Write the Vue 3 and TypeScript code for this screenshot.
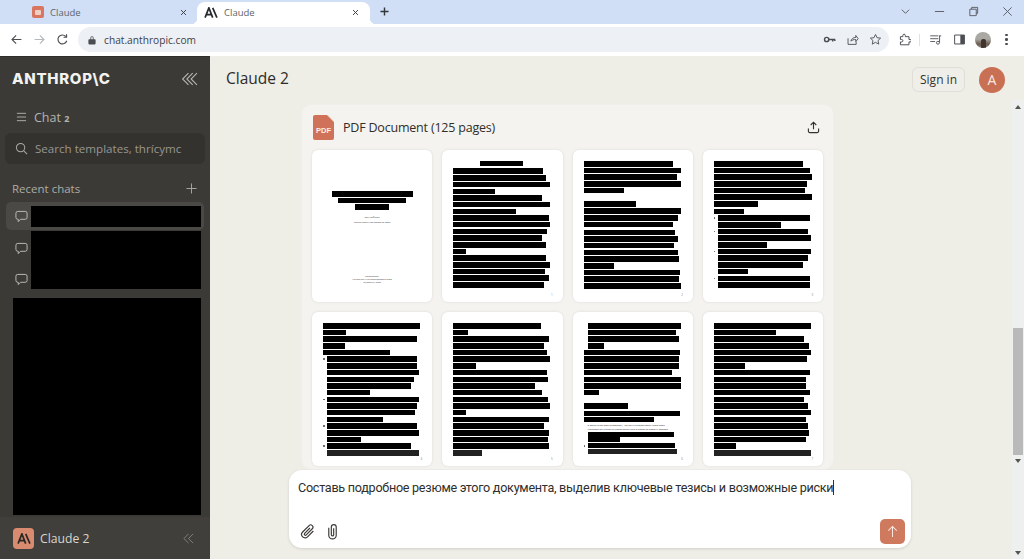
<script setup lang="ts">
// один блок-бар на странице PDF
interface Bar {
  w: number
  top?: number // отступ сверху от предыдущей строки, по умолчанию 1.2
  h?: number
  indent?: boolean
  dot?: boolean
}

interface Block {
  tiny?: string[]
  bar?: Bar
}

const plain = (list: number[]): Bar[] => list.map((w) => ({ w }))
const listed = (list: number[], dots: number[]): Bar[] =>
  list.map((w, i) => ({ w, indent: true, dot: dots.includes(i) }))
const blocks = (bars: Bar[]): Block[] => bars.map((bar) => ({ bar }))

const pages: Block[][] = [
  blocks(plain([90, 93, 97, 42, 89, 97, 63, 96, 97, 94, 89, 93, 13, 93, 97, 92, 96, 91])),
  blocks([
    ...plain([89, 97, 93, 97, 40]),
    { w: 52, top: 7.8 },
    { w: 97, top: 1.8 },
    ...plain([94, 89]),
    { w: 91, top: 2.4 },
    ...plain([94, 90, 94, 95, 30, 96, 95, 97])
  ]),
  blocks([
    ...plain([89, 96, 98, 93, 91, 98, 44]),
    { w: 30, top: 2 },
    ...listed([92, 63, 90, 93, 49, 93, 90, 85, 30, 92, 92], [0, 2, 5, 9])
  ]),
  blocks([
    ...plain([97, 23, 94, 22, 67]),
    ...listed([90, 90, 92, 87, 84, 43, 92, 90, 88, 56, 90, 92, 34, 84, 92], [0, 6, 10, 13])
  ]),
  blocks(plain([88, 15, 96, 91, 94, 97, 23, 94, 95, 82, 89, 95, 97, 13, 96, 91, 96, 95, 96, 29])),
  [
    ...blocks([
      ...listed([93, 88, 91, 16], []),
      ...plain([96, 95, 95, 88, 97, 97, 15]),
      { w: 44, top: 8 },
      { w: 96, top: 2, h: 5 },
      { w: 70, h: 5 }
    ]),
    {
      tiny: [
        'В заключение можно отметить, что данные показывают устойчивое',
        'направления и требуют дополнительного анализа со стороны авторов'
      ]
    },
    ...blocks([
      { w: 86, indent: true, top: 0.5, h: 4.5 },
      { w: 32, indent: true, top: 0.5, h: 4.5 },
      { w: 87, indent: true, top: 1.5, dot: true, h: 5 },
      { w: 89, indent: true, top: 0.5, h: 5 }
    ])
  ],
  blocks(plain([97, 62, 90, 95, 97, 93, 31, 96, 92, 92, 96, 90, 94, 97, 92, 94, 95, 92, 22, 97]))
]

const message = 'Составь подробное резюме этого документа, выделив ключевые тезисы и возможные риски'
</script>

<template>
  <div class="window">
    <!-- полоса вкладок -->
    <div class="tabstrip">
      <div class="tab">
        <span class="fav-orange"><i></i></span>
        <span class="tab-title">Claude</span>
        <svg class="tab-x" viewBox="0 0 10 10"><path d="M1.5 1.5l7 7M8.5 1.5l-7 7" /></svg>
      </div>
      <div class="tab active">
        <svg class="fav-a" viewBox="0 0 16 13"><path d="M1 12.500 5.500 1 10 12.500M3 9h5M10 1l5 11.500" /></svg>
        <span class="tab-title">Claude</span>
        <svg class="tab-x" viewBox="0 0 10 10"><path d="M1.5 1.5l7 7M8.5 1.5l-7 7" /></svg>
      </div>
      <svg class="tab-plus" viewBox="0 0 10 10"><path d="M5 .5v9M.5 5h9" /></svg>
      <div class="win-ctrl">
        <svg viewBox="0 0 12 12"><path d="M2 4l4 4 4-4" /></svg>
        <svg viewBox="0 0 12 12"><path d="M1 6h10" /></svg>
        <svg viewBox="0 0 12 12"><path d="M2 3.500h7v7H2zM4 3.500V1.500h6.500V8H9" /></svg>
        <svg viewBox="0 0 12 12"><path d="M1.500 1.500l9 9M10.500 1.500l-9 9" /></svg>
      </div>
    </div>

    <!-- тулбар браузера -->
    <div class="toolbar">
      <div class="nav">
        <svg viewBox="0 0 16 16"><path d="M14 8H2.500M7.500 3 2.500 8l5 5" /></svg>
        <svg class="off" viewBox="0 0 16 16"><path d="M2 8h11.500M8.500 3l5 5-5 5" /></svg>
        <svg viewBox="0 0 16 16"><path d="M13.200 9.500A5.500 5.500 0 1 1 12 4.200M13 1.500v3.700H9.300" /></svg>
      </div>
      <div class="omnibox">
        <svg class="lock" viewBox="0 0 10 12"><path d="M1.500 5h7a1 1 0 0 1 1 1v4.500a1 1 0 0 1-1 1h-7a1 1 0 0 1-1-1V6a1 1 0 0 1 1-1ZM3 5V3.200a2 2 0 0 1 4 0V5H6V3.200a1 1 0 0 0-2 0V5Z" /></svg>
        <span class="url">chat.anthropic.com</span>
        <div class="omni-icons">
          <svg class="key" viewBox="0 0 16 16"><circle cx="4.500" cy="8" r="2.600" /><path d="M7.200 8H15M12 8v2.500M14.500 8v1.800" /></svg>
          <svg viewBox="0 0 16 16"><path d="M2.500 6.500V14h10v-3.500M6 10c.5-3 3-4.500 6-4.500V3l3 4-3 3.500V8c-2.500 0-4.500.5-6 2Z" /></svg>
          <svg viewBox="0 0 16 16"><path d="m8 1.800 1.900 4 4.400.5-3.200 3 .9 4.400L8 11.500l-4 2.200.9-4.400-3.200-3 4.400-.5Z" /></svg>
        </div>
      </div>
      <div class="browser-icons">
        <svg class="ext" viewBox="0 0 16 16"><path d="M3 4.500h3V3a1.500 1.500 0 0 1 3 0v1.500h4.500V8H15a1.500 1.500 0 0 1 0 3h-1.500v3.500H3V11h1.500a1.500 1.500 0 0 0 0-3H3Z" /></svg>
        <span class="divider"></span>
        <svg class="media" viewBox="0 0 16 16"><path d="M1.500 3.500h10M1.500 7h10M1.500 10.500h6M12.500 3.500h2.500M13 3.500v8" /><circle cx="11" cy="12" r="1.800" /></svg>
        <svg class="panel" viewBox="0 0 16 16"><path d="M2 2.500h12v11H2z" /><path class="fill" d="M9 2.500h5v11H9z" /></svg>
        <span class="profile"><i></i></span>
        <span class="dots"><i></i><i></i><i></i></span>
      </div>
    </div>

    <div class="body">
      <!-- левая панель -->
      <aside class="sidebar">
        <div class="side-top">
          <span class="brand">ANTHROP\C</span>
          <svg class="side-chev" viewBox="0 0 16 13"><path d="M7 1 1.500 6.500 7 12M11 1 5.500 6.500 11 12M15 1 9.500 6.500 15 12" /></svg>
        </div>
        <div class="side-nav">
          <svg viewBox="0 0 12 10"><path d="M1 1h10M1 5h10M1 9h10" /></svg>
          <span>Chat <small>2</small></span>
        </div>
        <div class="search">
          <svg viewBox="0 0 14 14"><circle cx="6" cy="6" r="4.500" /><path d="m9.500 9.500 3.500 3.500" /></svg>
          <span>Search templates, thrícymc</span>
        </div>
        <div class="recent-head">
          <span>Recent chats</span>
          <svg viewBox="0 0 12 12"><path d="M6 .5v11M.5 6h11" /></svg>
        </div>
        <div class="chat-row current">
          <svg viewBox="0 0 14 14"><path d="M3 1.500h8a2 2 0 0 1 2 2V8a2 2 0 0 1-2 2H6l-2.500 2.500V10H3a2 2 0 0 1-2-2V3.500a2 2 0 0 1 2-2Z" /></svg>
          <div class="redact r1"></div>
        </div>
        <div class="chat-pair">
          <div class="pair-icons">
            <svg viewBox="0 0 14 14"><path d="M3 1.500h8a2 2 0 0 1 2 2V8a2 2 0 0 1-2 2H6l-2.500 2.500V10H3a2 2 0 0 1-2-2V3.500a2 2 0 0 1 2-2Z" /></svg>
            <svg viewBox="0 0 14 14"><path d="M3 1.500h8a2 2 0 0 1 2 2V8a2 2 0 0 1-2 2H6l-2.500 2.500V10H3a2 2 0 0 1-2-2V3.500a2 2 0 0 1 2-2Z" /></svg>
          </div>
          <div class="redact r2"></div>
        </div>
        <div class="redact r3"></div>
        <div class="side-foot">
          <span class="foot-logo">
            <svg viewBox="0 0 16 13"><path d="M1 12.500 5.500 1 10 12.500M3 9h5M10 1l5 11.500" /></svg>
          </span>
          <span class="foot-name">Claude 2</span>
          <svg class="foot-chev" viewBox="0 0 12 12"><path d="M6 1 1 6l5 5M11 1 6 6l5 5" /></svg>
        </div>
      </aside>

      <!-- основная часть -->
      <main class="main">
        <header class="topbar">
          <h1>Claude 2</h1>
          <button class="signin">Sign in</button>
          <span class="user">A</span>
        </header>
        <div class="scroll-wrap">
          <div class="content">
            <section class="doc">
              <div class="doc-head">
                <span class="pdf-icon">PDF</span>
                <span class="doc-title">PDF Document (125 pages)</span>
                <svg class="upload" viewBox="0 0 14 14"><path d="M7 9V1.500M4 4.300 7 1.300l3 3M1.500 8v3a1.500 1.500 0 0 0 1.500 1.500h8a1.500 1.500 0 0 0 1.500-1.500V8" /></svg>
              </div>
              <div class="grid">
                <div class="page cover">
                  <div class="cover-bar" style="width: 81px"></div>
                  <div class="cover-bar" style="width: 68px"></div>
                  <div class="cover-bar" style="width: 34px"></div>
                  <p class="tiny t1">Ваш реферат</p>
                  <p class="tiny t2">Заключительная работа за 2023</p>
                  <div class="cover-bottom">
                    <p class="tiny">Составитель</p>
                    <p class="tiny">Национальный исследовательский</p>
                    <p class="tiny">Будапешт, 2023</p>
                  </div>
                </div>
                <div v-for="(page, i) in pages" :key="i" class="page">
                  <div v-if="i === 0" class="page-title-bar"></div>
                  <template v-for="(block, j) in page" :key="j">
                    <div v-if="block.tiny" class="tiny-list">
                      <p v-for="(text, k) in block.tiny" :key="k" class="tiny">{{ text }}</p>
                    </div>
                    <div
                      v-if="block.bar"
                      class="line"
                      :class="{ indent: block.bar.indent, dot: block.bar.dot }"
                      :style="{
                        width: block.bar.w + 'px',
                        height: (block.bar.h ?? 5.5) + 'px',
                        marginTop: (j === 0 && i > 0 ? 0 : block.bar.top ?? 1.2) + 'px'
                      }"
                    ></div>
                  </template>
                  <span class="num">{{ i + 1 }}</span>
                </div>
              </div>
            </section>
          </div>
          <div class="scrollbar">
            <span class="arrow up"></span>
            <div class="thumb"></div>
            <span class="arrow down mid"></span>
            <span class="arrow down last"></span>
          </div>
        </div>
        <!-- поле ввода поверх контента -->
        <div class="composer">
          <div class="prompt">{{ message }}<span class="caret"></span></div>
          <div class="composer-foot">
            <svg class="clip" viewBox="0 0 16 16"><path d="M13.500 7.500 8 13a3.200 3.200 0 0 1-4.600-4.500L9.500 2.400a2.100 2.100 0 0 1 3 3L6.800 11.200a1 1 0 0 1-1.500-1.500l5-5" /></svg>
            <svg class="clip" viewBox="0 0 16 16"><path d="M4.500 4.500v7a3.500 3.500 0 0 0 7 0V3.800a2.300 2.300 0 0 0-4.600 0V11a1.100 1.100 0 0 0 2.200 0V5" /></svg>
            <button class="send">
              <svg viewBox="0 0 14 14"><path d="M7 13V1.500M2.500 6 7 1.500 11.500 6" /></svg>
            </button>
          </div>
        </div>
      </main>
    </div>
  </div>
</template>

<style>
html, body { margin: 0; height: 100%; overflow: hidden; }
</style>

<style scoped>
.window {
  width: 1024px;
  height: 559px;
  display: flex;
  flex-direction: column;
  font-family: "Open Sans", "Noto Sans", sans-serif;
  overflow: hidden;
}
svg { fill: none; stroke: currentColor; flex: none; }

/* вкладки */
.tabstrip {
  height: 24px;
  background: #d0dff6;
  display: flex;
  align-items: flex-end;
  padding-left: 25px;
  color: #454a52;
}
.tab {
  width: 172px;
  height: 22px;
  display: flex;
  align-items: center;
  padding: 0 7px 2px;
  box-sizing: border-box;
  position: relative;
}
.tab.active {
  background: #fff;
  border-radius: 8px 8px 0 0;
  width: 173px;
}
.tab.active::before,
.tab.active::after {
  content: "";
  position: absolute;
  bottom: 0;
  width: 6px;
  height: 6px;
}
.tab.active::before { left: -6px; background: radial-gradient(circle at 0 0, transparent 6px, #fff 6.5px); }
.tab.active::after { right: -6px; background: radial-gradient(circle at 100% 0, transparent 6px, #fff 6.5px); }
.fav-orange {
  width: 12px;
  height: 12px;
  border-radius: 2px;
  background: #d9765f;
  display: flex;
  align-items: center;
  justify-content: center;
}
.fav-orange i { width: 6px; height: 5px; background: #f2cfc4; border-radius: 1px; }
.fav-a { width: 14px; height: 11px; stroke: #26292e; stroke-width: 2; }
.tab-title {
  margin-left: 6px;
  font-size: 9.500px;
  color: #606368;
  flex: 1;
}
.tab-x { width: 7px; height: 7px; stroke-width: 1.400; color: #3e4146; margin-right: 3px; }
.active .tab-x { margin-right: 4px; }
.tab-plus { width: 9px; height: 9px; stroke-width: 1.600; margin: 0 0 8px 10px; color: #33373d; }
.win-ctrl {
  margin-left: auto;
  display: flex;
  align-items: center;
  gap: 23px;
  padding: 0 11px 7px 0;
  color: #55585e;
}
.win-ctrl svg { width: 11px; height: 11px; stroke-width: 1; }

/* тулбар */
.toolbar {
  height: 32px;
  background: #fff;
  display: flex;
  align-items: center;
  box-sizing: border-box;
  padding-bottom: 1px;
  color: #4a4d52;
}
.nav {
  width: 78px;
  display: flex;
  gap: 10px;
  padding-left: 10px;
  box-sizing: border-box;
}
.nav svg { width: 13px; height: 13px; stroke-width: 1.400; }
.nav .off { color: #b4b7bb; }
.omnibox {
  width: 811px;
  height: 25px;
  border-radius: 13px;
  background: #edf0f4;
  display: flex;
  align-items: center;
  padding: 0 7px 0 10px;
  box-sizing: border-box;
}
.lock { width: 8px; height: 10px; fill: #4a4d52; stroke: none; }
.url { margin-left: 8px; font-size: 10.200px; color: #3e4146; }
.omni-icons { margin-left: auto; display: flex; gap: 10px; align-items: center; }
.omni-icons svg { width: 13px; height: 13px; stroke-width: 1.100; }
.omni-icons .key { stroke-width: 1.800; }
.browser-icons { display: flex; align-items: center; flex: 1; padding-left: 9px; }
.ext { width: 13px; height: 13px; stroke-width: 1.200; }
.divider { width: 1px; height: 12px; background: #dfe1e4; margin: 0 9px 0 8px; }
.media { width: 13px; height: 13px; stroke-width: 1.100; }
.panel { width: 13px; height: 13px; stroke-width: 1.200; margin-left: 11px; }
.panel .fill { fill: currentColor; stroke: none; }
.profile {
  width: 16px;
  height: 16px;
  border-radius: 50%;
  margin-left: 9px;
  background: linear-gradient(#a9a8a3 45%, #6d5c50 75%, #8d8a85);
  display: flex;
  justify-content: center;
  align-items: flex-end;
  overflow: hidden;
}
.profile i { width: 5px; height: 9px; background: #41362f; border-radius: 2px 2px 0 0; }
.dots { display: flex; flex-direction: column; gap: 2px; margin-left: 14px; }
.dots i { width: 2.500px; height: 2.500px; border-radius: 50%; background: #4a4d52; }

.body { flex: 1; display: flex; min-height: 0; }

/* сайдбар */
.sidebar {
  width: 210px;
  flex: none;
  background: #3b3a37;
  color: #c4c2bb;
  display: flex;
  flex-direction: column;
  box-sizing: border-box;
  border-top: 1px solid #2f2e2c;
}
.side-top {
  height: 43px;
  display: flex;
  align-items: center;
  justify-content: space-between;
  padding: 0 12px;
}
.brand {
  font-family: Inter, sans-serif;
  font-weight: 800;
  font-size: 15px;
  letter-spacing: 0.700px;
  color: #f3f2ee;
}
.side-chev { width: 17px; height: 14px; stroke-width: 1; color: #b9b7b0; }
.side-nav {
  height: 24px;
  display: flex;
  align-items: center;
  gap: 7px;
  padding-left: 16px;
  margin-top: 5px;
  font-size: 12.500px;
  color: #b6b4ad;
}
.side-nav svg { width: 11px; height: 10px; stroke-width: 1; }
.side-nav small { font-size: 9px; font-weight: 700; }
.search {
  margin: 4px 5px 0;
  height: 31px;
  border-radius: 6px;
  background: #33322f;
  display: flex;
  align-items: center;
  padding: 0 10px;
  gap: 7px;
  font-size: 11.600px;
  color: #989690;
  white-space: nowrap;
  overflow: hidden;
}
.search svg { width: 13px; height: 13px; stroke-width: 1.100; color: #aaa8a1; }
.recent-head {
  display: flex;
  align-items: center;
  justify-content: space-between;
  padding: 0 13px 0 12px;
  margin-top: 14px;
  height: 20px;
  font-size: 11.500px;
  color: #aeaca5;
}
.recent-head svg { width: 11px; height: 11px; stroke-width: 1; }
.chat-row {
  margin: 4px 6px 0;
  height: 28px;
  border-radius: 5px;
  display: flex;
  align-items: center;
  background: #4a4946;
}
.chat-row svg, .pair-icons svg { width: 13px; height: 13px; stroke-width: 1; color: #c3c1ba; margin-left: 9px; }
.redact { background: #000; }
.r1 { width: 170px; height: 21px; margin-left: 3px; }
.chat-pair { display: flex; margin: 1px 9px 0 0; padding-left: 6px; }
.pair-icons {
  width: 25px;
  display: flex;
  flex-direction: column;
  padding-top: 11px;
  gap: 18px;
}
.r2 { width: 170px; height: 58px; }
.r3 { width: 188px; height: 217px; margin: 9px 0 0 13px; }
.side-foot {
  margin-top: 2px;
  flex: 1;
  background: #403f3c;
  display: flex;
  align-items: center;
  padding: 0 16px 0 13px;
}
.foot-logo {
  width: 21px;
  height: 21px;
  border-radius: 4px;
  background: #d98b70;
  display: flex;
  align-items: center;
  justify-content: center;
}
.foot-logo svg { width: 14px; height: 11px; stroke: #2a2926; stroke-width: 2; }
.foot-name { margin-left: 6px; font-size: 12.200px; font-weight: 500; color: #d8d6cf; }
.foot-chev { margin-left: auto; width: 11px; height: 11px; stroke-width: 0.900; color: #8f8d87; }

/* основная часть */
.main {
  flex: 1;
  position: relative;
  background: #eeede6;
  display: flex;
  flex-direction: column;
  min-width: 0;
}
.topbar {
  height: 44px;
  display: flex;
  align-items: center;
  padding: 0 19px 0 16px;
  flex: none;
}
.topbar h1 {
  margin: 0;
  font-size: 15.500px;
  font-weight: 500;
  color: #2d2c29;
  flex: 1;
}
.signin {
  width: 53px;
  height: 25px;
  padding: 0;
  font: inherit;
  font-size: 12px;
  border: 1px solid #e0ded6;
  border-radius: 6px;
  background: #efeee8;
  color: #33322f;
  margin-top: 3px;
}
.user {
  width: 26px;
  height: 26px;
  border-radius: 50%;
  background: #c96f53;
  color: #fbe9e2;
  font-size: 14px;
  display: flex;
  align-items: center;
  justify-content: center;
  margin: 3px 0 0 14px;
}
.scroll-wrap { flex: 1; display: flex; min-height: 0; }
.content { flex: 1; overflow: hidden; padding: 4px 0 0 91px; }
.doc {
  width: 533px;
  background: #f4f3ef;
  border: 1px solid #f0efe9;
  border-radius: 10px;
  box-sizing: border-box;
  padding: 0 10px 3px 10px;
}
.doc-head {
  height: 45px;
  display: flex;
  align-items: center;
  padding: 0 3px 0 1px;
}
.pdf-icon {
  width: 21px;
  height: 25px;
  background: linear-gradient(225deg, #e8b3a1 0 5px, #cf7259 5px);
  border-radius: 2px;
  clip-path: polygon(0 0, 70% 0, 100% 26%, 100% 100%, 0 100%);
  color: #fbeee9;
  font: 700 7.500px "Liberation Sans", sans-serif;
  display: flex;
  align-items: flex-end;
  justify-content: center;
  padding-bottom: 5px;
  box-sizing: border-box;
}
.doc-title { margin-left: 9px; font-size: 12.500px; letter-spacing: -0.200px; color: #2f2e2b; flex: 1; }
.upload { width: 13px; height: 13px; stroke-width: 1.200; color: #33322f; }
.grid {
  display: grid;
  grid-template-columns: repeat(4, 120.300px);
  grid-template-rows: 152px 154px;
  gap: 10px;
}
.page {
  background: #fff;
  border-radius: 6px;
  box-shadow: 0 0 3px rgba(0, 0, 0, 0.1);
  padding: 11px 0 0 11px;
  box-sizing: border-box;
  position: relative;
  display: flex;
  flex-direction: column;
}
.page-title-bar { width: 43px; height: 5px; background: #000; margin: 0 0 1.300px 27px; }
.line { background: #000; flex: none; position: relative; }
.page:nth-child(n+5) .line:last-of-type { background: #222; }
.line.indent { margin-left: 4px; }
.line.dot::before {
  content: "";
  position: absolute;
  left: -4px;
  top: 2px;
  width: 1.500px;
  height: 1.500px;
  border-radius: 50%;
  background: #555;
}
.num { position: absolute; right: 10px; bottom: 5px; font-size: 3px; color: #888; }
.cover { align-items: center; padding: 41px 0 0; }
.cover-bar { height: 5.500px; background: #000; margin-bottom: 1px; flex: none; }
.tiny { margin: 0; font-size: 2.300px; line-height: 3px; color: #333; text-align: center; white-space: nowrap; }
.t1 { margin-top: 5px; }
.t2 { margin-top: 2.400px; }
.cover-bottom { margin-top: 51px; }
.tiny-list { margin: 1.500px 0 0 4px; }
.tiny-list .tiny { text-align: left; line-height: 4px; color: #222; }

/* скроллбар */
.scrollbar {
  width: 12px;
  flex: none;
  background: #eef0f0;
  display: flex;
  flex-direction: column;
  align-items: center;
  padding-top: 5px;
  box-sizing: border-box;
}
.arrow { width: 0; height: 0; border-left: 3px solid transparent; border-right: 3px solid transparent; flex: none; }
.arrow.up { border-bottom: 4px solid #55544f; }
.arrow.down { border-top: 4px solid #55544f; }
.thumb { width: 10px; height: 127px; background: #b9b9b9; margin: 219px 0 4px; flex: none; }
.arrow.last { margin-top: 88px; }

/* поле ввода */
.composer {
  position: absolute;
  left: 79px;
  top: 414px;
  width: 622px;
  height: 78px;
  background: #fff;
  border-radius: 13px;
  box-shadow: 0 1px 3px rgba(0, 0, 0, 0.12);
  padding: 9px 6px 4px 9px;
  box-sizing: border-box;
  display: flex;
  flex-direction: column;
  justify-content: space-between;
}
.prompt { font-family: Roboto, sans-serif; font-size: 12.600px; letter-spacing: -0.270px; line-height: 18px; color: #2f2e2b; white-space: nowrap; }
.caret { display: inline-block; width: 1px; height: 15px; background: #2f2e2b; vertical-align: -3px; }
.composer-foot { display: flex; align-items: center; gap: 8px; padding-left: 1px; }
.clip { width: 17px; height: 17px; stroke-width: 1.100; color: #3b3a37; }
.send {
  margin-left: auto;
  width: 25px;
  height: 25px;
  padding: 0;
  border: 0;
  border-radius: 5px;
  background: #cf7a5e;
  color: #fbe7df;
  display: flex;
  align-items: center;
  justify-content: center;
}
.send svg { width: 13px; height: 13px; stroke-width: 1.100; }
</style>
